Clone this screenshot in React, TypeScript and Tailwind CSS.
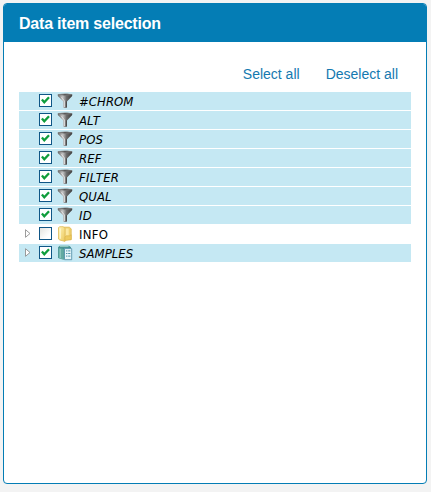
type Kind = 'filter' | 'folder' | 'samples';

interface Item {
  label: string;
  kind: Kind;
  checked: boolean;
  expandable?: boolean;
  spacing: string;
}

const items: Item[] = [
  { label: '#CHROM', kind: 'filter', checked: true, spacing: 'tracking-[0.05px]' },
  { label: 'ALT', kind: 'filter', checked: true, spacing: 'tracking-[0.1px]' },
  { label: 'POS', kind: 'filter', checked: true, spacing: 'tracking-[0.1px]' },
  { label: 'REF', kind: 'filter', checked: true, spacing: 'tracking-[0.1px]' },
  { label: 'FILTER', kind: 'filter', checked: true, spacing: 'tracking-[0.3px]' },
  { label: 'QUAL', kind: 'filter', checked: true, spacing: 'tracking-[0.1px]' },
  { label: 'ID', kind: 'filter', checked: true, spacing: 'tracking-[0.2px]' },
  { label: 'INFO', kind: 'folder', checked: false, expandable: true, spacing: 'tracking-[0.3px]' },
  { label: 'SAMPLES', kind: 'samples', checked: true, expandable: true, spacing: 'tracking-[0.05px]' },
];

function Checkbox({ checked }: { checked: boolean }) {
  return (
    <svg width="13" height="13" viewBox="0 0 13 13" className="mb-px shrink-0" role="checkbox" aria-checked={checked}>
      <defs>
        <linearGradient id="boxFill" x1="0" y1="0" x2="1" y2="1">
          <stop offset="0" stopColor="#e2e2dd" />
          <stop offset="0.7" stopColor="#ffffff" />
        </linearGradient>
      </defs>
      <rect x="0.5" y="0.5" width="12" height="12" fill={checked ? '#fff' : 'url(#boxFill)'} stroke="#0f5686" />
      {checked && <path d="M2.9 5.4L5.3 8.2L10 3.2" fill="none" stroke="#0f9d3c" strokeWidth="2.3" />}
    </svg>
  );
}

function FilterIcon() {
  return (
    <svg width="16" height="16" viewBox="0 0 16 16">
      <defs>
        <linearGradient id="metal" x1="0" x2="1">
          <stop offset="0" stopColor="#666" />
          <stop offset="0.35" stopColor="#c4c4c4" />
          <stop offset="0.6" stopColor="#6c6c6c" />
          <stop offset="1" stopColor="#3d3d3d" />
        </linearGradient>
      </defs>
      <path d="M.8 1.2C3 .5 13 .5 15.2 1.2V3L10 8.4V14.4Q8 15.4 6.2 14.4V8.4L.8 3Z" fill="url(#metal)" />
      <path d="M1 1.6Q8 .2 15 1.6Q8 3.2 1 1.6Z" fill="#484848" stroke="#8b8b8b" strokeWidth=".5" />
      <path d="M4.2 3.7L7.4 8V14" fill="none" stroke="#dedede" strokeWidth="1" />
      <path d="M9.4 8.4V14.2" stroke="#4a4a4a" />
    </svg>
  );
}

function FolderIcon() {
  return (
    <svg width="16" height="16" viewBox="0 0 16 16">
      <defs>
        <linearGradient id="folder" x1="0" x2="1" y2="1">
          <stop offset="0" stopColor="#fff3b5" />
          <stop offset="1" stopColor="#ecc95e" />
        </linearGradient>
      </defs>
      <path d="M6.5 1.2h5.8l1.9 1.6v10.9H7z" fill="#f0d172" stroke="#dcb64c" strokeWidth=".8" />
      <path d="M8.5 2.5h3.2v9H8.5z" fill="#fbe9a2" />
      <path d="M1.5 1.6L2.8 .7h3.6L8 2.6v12.8L2.8 14l-1.3-1z" fill="url(#folder)" stroke="#e0bd5b" strokeWidth=".8" />
      <path d="M8 13.8V11l1.2-1.2h3.5l1.5-1v4.7L8 14.6z" fill="#eecb60" stroke="#d8b14a" strokeWidth=".6" />
      <path d="M3.2 2.5v10.3" stroke="#fffbd9" />
    </svg>
  );
}

function SamplesIcon() {
  return (
    <svg width="16" height="16" viewBox="0 0 16 16">
      <path d="M1.1 2.2L2.6.8H12l2 1.5v12H6.8L1.1 13z" fill="#438f91" />
      <path d="M1.8 2.8l5 1.1v11L1.8 13.2z" fill="#62aaa2" />
      <path d="M2.8 1.6h8.8M3.2 4v9" stroke="#a4d5cc" strokeWidth=".9" />
      <path d="M7.5 3.6h7.2v11.1H7.5z" fill="#e6f6fa" stroke="#5995ae" strokeWidth=".9" />
      <path d="M9 5.9h1.4M11.2 5.9h2.2M9 8.5h1.4M11.2 8.5h2.2M9 11.1h1.4M11.2 11.1h2.2" stroke="#4f93aa" />
    </svg>
  );
}

function Row({ item }: { item: Item }) {
  return (
    <li className={`flex h-[18px] items-center ${item.checked ? 'bg-[#c5e8f3]' : 'bg-white'}`}>
      <span className="w-5 shrink-0 pb-px pl-1.5">
        {item.expandable && (
          <svg width="6" height="9" viewBox="0 0 6 9">
            <path d="M.5 .7L5 4.5L.5 8.3Z" fill="#fff" stroke="#919191" strokeWidth=".9" />
          </svg>
        )}
      </span>
      <Checkbox checked={item.checked} />
      <span className="ml-[5px] mr-[6px] w-4 shrink-0">
        {item.kind === 'filter' ? <FilterIcon /> : item.kind === 'folder' ? <FolderIcon /> : <SamplesIcon />}
      </span>
      <span
        className={`whitespace-nowrap pt-px font-['DejaVu_Sans_Condensed','DejaVu_Sans',sans-serif] text-[13px] leading-[17px] text-black ${item.spacing} ${item.checked ? 'italic' : ''}`}
      >
        {item.label}
      </span>
    </li>
  );
}

export default function App() {
  return (
    <div className="h-[492px] w-[431px] bg-[#f3f3f3] pl-[3px] pt-[3px] font-['Liberation_Sans',Arial,sans-serif]">
      <section className="h-[481px] w-[424px] overflow-hidden rounded-[4px] border border-[#047db5] bg-white">
        <header className="flex h-[38px] items-center bg-[#047db5] pl-[15px] pt-px">
          <h1 className="text-[16px] font-bold leading-5 tracking-[-0.21px] text-white">Data item selection</h1>
        </header>
        <nav className="flex h-[50px] items-end justify-end gap-[26px] pb-[8px] pr-[28px] text-[14px] leading-5 text-[#1479b0]">
          <button type="button">Select all</button>
          <button type="button">Deselect all</button>
        </nav>
        <ul className="ml-[15px] flex w-[392px] flex-col gap-px [&_svg]:block">
          {items.map((item) => (
            <Row key={item.label} item={item} />
          ))}
        </ul>
      </section>
    </div>
  );
}
